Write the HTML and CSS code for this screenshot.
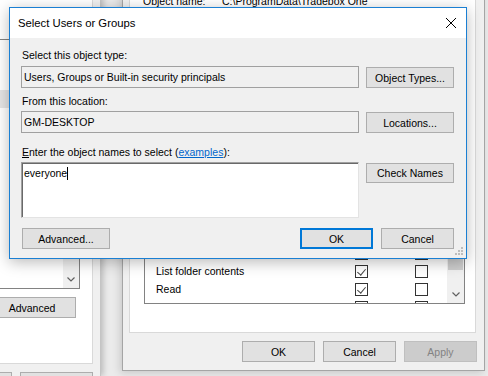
FILE: index.html
```html
<!DOCTYPE html>
<html lang="en">
<head>
  <meta charset="UTF-8" />
  <title>Select Users or Groups</title>
  <link rel="stylesheet" href="styles.css">
</head>
<body>
  <!-- window behind, on the left -->
  <div class="win win-left">
    <div class="tab">
      <div class="listbox">
        <div class="lb-items">
          <div class="lb-sel"></div>
        </div>
        <div class="vscroll">
          <div class="track"></div>
          <div class="arrow">
            <svg width="8" height="5" viewBox="0 0 8 5"><polyline points="0.5,0.5 4,4 7.5,0.5" fill="none" stroke="#606060" stroke-width="1.2"/></svg>
          </div>
        </div>
      </div>
      <button class="btn btn-adv">Advanced</button>
    </div>
    <div class="win-buttons">
      <button class="btn" aria-label="OK"></button>
      <button class="btn" aria-label="Cancel"></button>
    </div>
  </div>

  <!-- security tab window behind, on the right -->
  <div class="win win-right">
    <div class="tab">
      <div class="objname">
        <span class="objname-label">Object name:</span>
        <span>C:\ProgramData\Tradebox One</span>
      </div>
      <div class="listview">
        <div class="lv-rows">
          <div class="lv-row"><span class="lv-name">Full control</span><span class="chk on"></span><span class="chk"></span></div>
          <div class="lv-row"><span class="lv-name">Modify</span><span class="chk"></span><span class="chk"></span></div>
          <div class="lv-row"><span class="lv-name">Read &amp; execute</span><span class="chk on"></span><span class="chk"></span></div>
          <div class="lv-row"><span class="lv-name">List folder contents</span><span class="chk on"></span><span class="chk"></span></div>
          <div class="lv-row"><span class="lv-name">Read</span><span class="chk on"></span><span class="chk"></span></div>
          <div class="lv-row"><span class="lv-name">Write</span><span class="chk"></span><span class="chk"></span></div>
        </div>
        <div class="vscroll lv-scroll">
          <div class="arrow"></div>
          <div class="track"><div class="thumb"></div></div>
          <div class="arrow">
            <svg width="8" height="5" viewBox="0 0 8 5"><polyline points="0.5,0.5 4,4 7.5,0.5" fill="none" stroke="#606060" stroke-width="1.2"/></svg>
          </div>
        </div>
      </div>
    </div>
    <div class="win-buttons right-buttons">
      <button class="btn">OK</button>
      <button class="btn">Cancel</button>
      <button class="btn" disabled>Apply</button>
    </div>
  </div>

  <!-- the dialog on top -->
  <div class="dlg">
    <div class="dlg-title">
      <span>Select Users or Groups</span>
      <svg class="close" width="10" height="10" viewBox="0 0 10 10"><path d="M0 0 L10 10 M10 0 L0 10" stroke="#000" stroke-width="1"/></svg>
    </div>
    <div class="dlg-body">
      <div class="lbl">Select this object type:</div>
      <div class="row">
        <div class="field">Users, Groups or Built-in security principals</div>
        <button class="btn side">Object Types...</button>
      </div>
      <div class="lbl lbl-loc">From this location:</div>
      <div class="row">
        <div class="field">GM-DESKTOP</div>
        <button class="btn side">Locations...</button>
      </div>
      <div class="lbl lbl-names"><u>E</u>nter the object names to select (<a href="#">examples</a>):</div>
      <div class="row">
        <div class="names">everyone<span class="caret"></span></div>
        <button class="btn side check">Check Names</button>
      </div>
      <div class="dlg-foot">
        <button class="btn btn-wide">Advanced...</button>
        <span class="fill"></span>
        <button class="btn btn-ok">OK</button>
        <button class="btn">Cancel</button>
      </div>
    </div>
    <svg class="grip" width="8" height="8" viewBox="0 0 8 8" fill="#bdbdbd">
      <rect x="6" y="0" width="2" height="2"/>
      <rect x="3" y="3" width="2" height="2"/><rect x="6" y="3" width="2" height="2"/>
      <rect x="0" y="6" width="2" height="2"/><rect x="3" y="6" width="2" height="2"/><rect x="6" y="6" width="2" height="2"/>
    </svg>
  </div>
</body>
</html>
```

FILE: styles.css
```css
* {
  box-sizing: border-box;
}

html,
body {
  margin: 0;
}

body {
  width: 488px;
  height: 376px;
  overflow: hidden;
  position: relative;
  background: #ebebeb;
  font-family: "Segoe UI", "Liberation Sans", Arial, sans-serif;
  font-size: 10.5px;
  color: #000;
}

.btn {
  font: inherit;
  color: #000;
  background: #e1e1e1;
  border: 1px solid #adadad;
  padding: 0;
  height: 21px;
  width: 73px;
}

.btn:disabled {
  background: #cccccc;
  border-color: #bfbfbf;
  color: #838383;
}

/* background windows */
.win {
  position: absolute;
  background: #f0f0f0;
  display: flex;
  flex-direction: column;
  overflow: hidden;
}

.tab {
  background: #fff;
  border: 1px solid #d9d9d9;
  display: flex;
  flex-direction: column;
  flex-shrink: 0;
}

.win-buttons {
  display: flex;
  justify-content: flex-end;
  gap: 8px;
  margin-top: 8px;
  flex-shrink: 0;
}

.win-left {
  left: -70px;
  top: -20px;
  width: 171px;
  height: 396px;
  padding: 0 7px;
  border-right: 1px solid #c4c4c4;
  box-shadow: 2px 0 6px rgba(0, 0, 0, 0.22);
}

.win-left .tab {
  height: 384px;
}

.listbox {
  display: flex;
  height: 250px;
  margin: 58px 12px 0 0;
  border: 1px solid #828282;
}

.lb-items {
  flex: 1;
}

.lb-sel {
  margin-top: 50px;
  height: 18px;
  background: #e5e5e5;
}

.vscroll {
  width: 16px;
  background: #f0f0f0;
  display: flex;
  flex-direction: column;
  flex-shrink: 0;
}

.vscroll .track {
  flex: 1;
}

.vscroll .arrow {
  height: 17px;
  display: flex;
  align-items: center;
  justify-content: center;
}

.btn-adv {
  width: 88px;
  margin: 8px 0 0 50px;
}

.win-right {
  left: 122px;
  top: -30px;
  width: 363px;
  height: 401px;
  padding: 0 8px 0 6px;
  border: 1px solid #a5a5a5;
  box-shadow: -2px 2px 8px rgba(0, 0, 0, 0.15);
}

.win-right .tab {
  height: 362px;
  padding: 22px 0 0 13px;
}

.objname {
  display: flex;
  line-height: 14px;
}

.objname-label {
  width: 79px;
}

.listview {
  display: flex;
  height: 97px;
  margin: auto 10px 28px 1px;
  border: 1px solid #828282;
}

.lv-rows {
  flex: 1;
  min-width: 0;
  overflow: hidden;
}

.lv-row {
  display: flex;
  align-items: center;
  gap: 47px;
  height: 18px;
}

.lv-name {
  width: 210px;
  margin-right: -47px;
  padding-left: 11px;
}

.chk {
  width: 13px;
  height: 13px;
  border: 1px solid #333;
  background: #fff;
  position: relative;
  flex-shrink: 0;
}

.chk.on::after {
  content: "";
  position: absolute;
  left: 3px;
  top: 1px;
  width: 4px;
  height: 7px;
  border: solid #444;
  border-width: 0 1px 1px 0;
  transform: rotate(40deg);
}

.lv-scroll {
  width: 17px;
}

.lv-scroll .track {
  padding: 0 1px;
}

.thumb {
  height: 45px;
  background: #cdcdcd;
}

.right-buttons {
  margin-right: -1px;
}

/* dialog */
.dlg {
  position: absolute;
  left: 9px;
  top: 7px;
  width: 458px;
  height: 252px;
  background: #f0f0f0;
  border: 1px solid #1a7fd3;
  box-shadow: 0 3px 14px rgba(0, 0, 0, 0.28);
}

.dlg-title {
  height: 30px;
  background: #fff;
  display: flex;
  align-items: center;
  justify-content: space-between;
  padding: 0 10px 0 8px;
  font-size: 11.3px;
}

.close {
  margin-top: -1px;
}

.dlg-body {
  padding: 10px 12px 0 11px;
}

.lbl {
  line-height: 14px;
  margin-bottom: 4px;
  padding-left: 1px;
}

.lbl-loc {
  margin-top: 6px;
  margin-bottom: 3px;
}

.lbl-names {
  margin-top: 12px;
  margin-bottom: 3px;
}

.lbl a {
  color: #0066cc;
}

.row {
  display: flex;
  align-items: flex-start;
  gap: 7px;
}

.field {
  flex: 1;
  height: 22px;
  line-height: 20px;
  padding-left: 2px;
  border: 1px solid #a0a0a0;
  background: #f0f0f0;
  white-space: nowrap;
}

.side {
  width: 88px;
  margin-top: 1px;
}

.check {
  height: 20px;
}

.names {
  flex: 1;
  height: 56px;
  padding: 3px 2px;
  line-height: 14px;
  background: #fff;
  border: 1px solid;
  border-color: #a0a0a0 #e3e3e3 #e3e3e3 #a0a0a0;
  box-shadow: inset 1px 1px 0 #696969;
}

.caret {
  display: inline-block;
  width: 1px;
  height: 13px;
  background: #000;
  vertical-align: -3px;
}

.dlg-foot {
  display: flex;
  gap: 8px;
  margin-top: 10px;
}

.fill {
  flex: 1;
}

.btn-wide {
  width: 88px;
  margin-left: 1px;
}

.btn-ok {
  border: 2px solid #0078d7;
}

.grip {
  position: absolute;
  right: 3px;
  bottom: 3px;
}
```
